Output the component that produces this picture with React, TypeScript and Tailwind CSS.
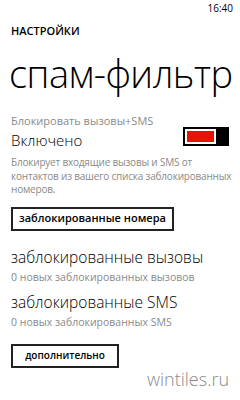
import React from "react";

export default function App() {
  return (
    <div className="w-[240px] h-[400px] bg-white text-black overflow-hidden relative" style={{ fontFamily: '"Open Sans", "Noto Sans", sans-serif' }}>
      <div className="flex justify-end pr-[7px] pt-[1px] h-[20px] text-[10px] leading-[14px]">16:40</div>
      <div className="pl-[11px]">
        <div className="mt-[4px] text-[11px] leading-[14px] font-semibold">НАСТРОЙКИ</div>
        <div className="mt-[14px] text-[38px] leading-[42px] font-light tracking-[-0.5px] ml-[-2px]">спам-фильтр</div>
        <div className="mt-[20px] text-[11px] leading-[14px] text-[#8a8a8a]">Блокировать вызовы+SMS</div>
        <div className="flex items-start justify-between pr-[11px]">
          <div className="text-[15px] leading-[20px] font-light mt-[2px]">Включено</div>
          <div className="flex items-stretch h-[19px] mt-[-1px]">
            <div className="w-[35px] border-2 border-black p-[2px] flex">
              <div className="flex-1 bg-[#e51400]"></div>
            </div>
            <div className="w-[11px] bg-black"></div>
          </div>
        </div>
        <div className="mt-[6px] text-[10px] leading-[13.5px] tracking-[-0.2px] text-[#8a8a8a]">
          Блокирует входящие вызовы и SMS от контактов из вашего списка заблокированных номеров.
        </div>
        <div className="mt-[10px] inline-flex border-2 border-[#222] px-[6px] h-[24px] items-center text-[11px] font-semibold">заблокированные номера</div>
        <div className="mt-[16px] text-[15.5px] leading-[20px] font-light">заблокированные вызовы</div>
        <div className="mt-[4px] text-[10.5px] leading-[13px] text-[#8a8a8a]">0 новых заблокированных вызовов</div>
        <div className="mt-[8px] text-[15.5px] leading-[20px] font-light">заблокированные SMS</div>
        <div className="mt-[4px] text-[10.5px] leading-[13px] text-[#8a8a8a]">0 новых заблокированных SMS</div>
        <div className="mt-[15px] w-[108px] h-[24px] flex items-center justify-center border-2 border-[#222] text-[10px] font-semibold">дополнительно</div>
      </div>
      <div className="absolute left-[147px] top-[368px] text-[18px] leading-[22px] text-[#8a8a8a] font-light">wintiles.ru</div>
    </div>
  );
}
